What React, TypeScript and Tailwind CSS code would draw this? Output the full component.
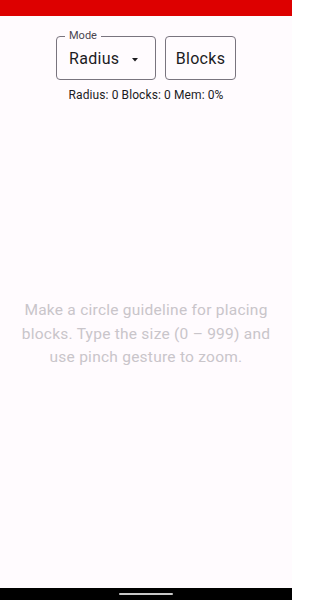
export default function App() {
  return (
    <div
      className="flex h-[600px] w-[292px] flex-col bg-[#fffbfe] text-[#1c1b1f]"
      style={{ fontFamily: "Roboto, 'Noto Sans', sans-serif" }}
    >
      <div className="h-4 shrink-0 bg-[#dd0000]" />

      <div className="mt-5 flex justify-center gap-[9px]">
        <div className="relative flex h-11 w-[100px] items-center justify-between rounded border border-[#79747e] pl-3 pr-[17px] pt-[2px]">
          <span className="absolute -top-[8px] left-[8px] bg-[#fffbfe] px-1 text-[11px] leading-[14px] text-[#49454f]">
            Mode
          </span>
          <span className="text-[16px] tracking-[0.3px]">Radius</span>
          <svg width="6" height="4" viewBox="0 0 6 4" className="mt-px">
            <path d="M0 0 L6 0 L3 3.5 Z" fill="#1c1b1f" />
          </svg>
        </div>
        <div className="flex h-11 w-[71px] items-center justify-center rounded border border-[#79747e] pt-[2px] text-[16px] tracking-[0.3px]">
          Blocks
        </div>
      </div>

      <div className="mt-[8px] text-center text-[12px] leading-[14px] tracking-[0.1px] text-[#1c1b1f]">
        Radius: 0 Blocks: 0 Mem: 0%
      </div>

      <div className="flex flex-1 items-start justify-center px-3 pt-[197px]">
        <p className="text-center text-[15.5px] leading-[23.5px] tracking-[0.25px] text-[#c9c5ca]">
          Make a circle guideline for placing blocks. Type the size (0 – 999) and use pinch gesture to zoom.
        </p>
      </div>

      <div className="flex h-3 shrink-0 items-center justify-center bg-black">
        <div className="h-[2px] w-[54px] rounded-full bg-[#c8c8c8]" />
      </div>
    </div>
  );
}
